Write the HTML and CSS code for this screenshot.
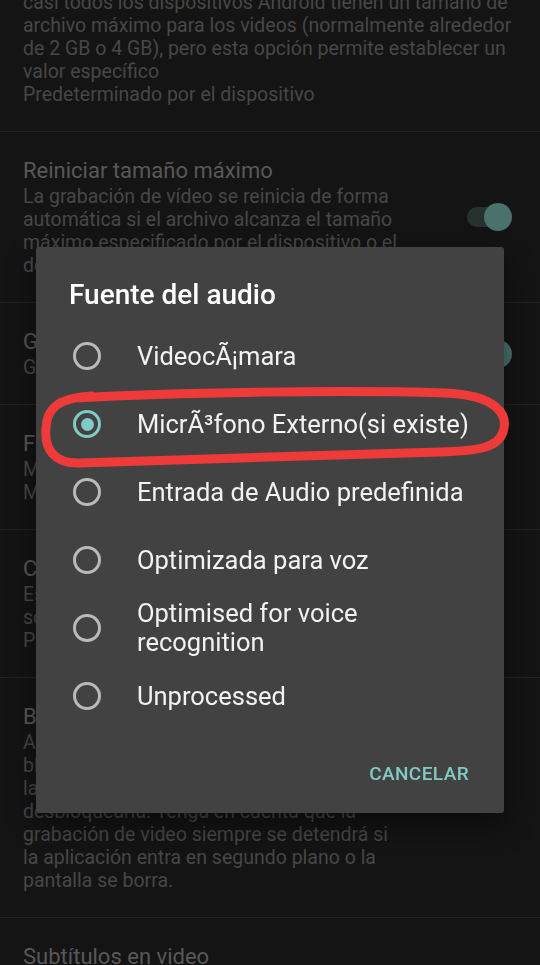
FILE: index.html
```html
<!DOCTYPE html>
<html lang="es">
<head>
    <meta charset="UTF-8">
    <meta name="viewport" content="width=device-width, initial-scale=1.0">
    <title>Ajustes de video</title>
    <link rel="stylesheet" href="styles.css">
</head>
<body>
    <ul class="prefs">
        <li class="pref">
            <div class="pref-text wide">
                <p class="pref-title">Tamaño máximo de archivo de video</p>
                <p class="pref-summary">casi todos los dispositivos Android tienen un tamaño de<br>archivo máximo para los videos (normalmente alrededor<br>de 2 GB o 4 GB), pero esta opción permite establecer un<br>valor específico<br>Predeterminado por el dispositivo</p>
            </div>
        </li>
        <li class="pref">
            <div class="pref-text">
                <p class="pref-title">Reiniciar tamaño máximo</p>
                <p class="pref-summary">La grabación de vídeo se reinicia de forma<br>automática si el archivo alcanza el tamaño<br>máximo especificado por el dispositivo o el<br>definido por el usuario</p>
            </div>
            <span class="switch on"></span>
        </li>
        <li class="pref">
            <div class="pref-text">
                <p class="pref-title">Grabar audio</p>
                <p class="pref-summary">Grabar audio al grabar video</p>
            </div>
            <span class="switch on"></span>
        </li>
        <li class="pref">
            <div class="pref-text">
                <p class="pref-title">Fuente del audio</p>
                <p class="pref-summary">Micrófono usado para grabar el audio<br>MicrÃ³fono Externo(si existe)</p>
            </div>
        </li>
        <li class="pref">
            <div class="pref-text">
                <p class="pref-title">Canales de audio</p>
                <p class="pref-summary">Especifica si se graba en mono o estéreo;<br>solo algunos dispositivos lo soportan<br>Predeterminado (mono)</p>
            </div>
        </li>
        <li class="pref">
            <div class="pref-text">
                <p class="pref-title">Bloquear pantalla al grabar video</p>
                <p class="pref-summary">Al grabar video, la interfaz gráfica se<br>bloqueará para evitar interrupciones y<br>la pantalla se desbloquea deslizando como<br>desbloquearía. Tenga en cuenta que la<br>grabación de video siempre se detendrá si<br>la aplicación entra en segundo plano o la<br>pantalla se borra.</p>
            </div>
        </li>
        <li class="pref">
            <div class="pref-text">
                <p class="pref-title">Subtítulos en video</p>
                <p class="pref-summary">Guardar un archivo de subtítulos con la fecha y hora</p>
            </div>
        </li>
    </ul>

    <div class="scrim">
        <div class="dialog">
            <h2 class="dialog-title">Fuente del audio</h2>
            <ul class="options">
                <li class="option"><span class="radio"></span><span class="option-label">VideocÃ¡mara</span></li>
                <li class="option"><span class="radio checked"></span><span class="option-label">MicrÃ³fono Externo(si existe)</span></li>
                <li class="option"><span class="radio"></span><span class="option-label">Entrada de Audio predefinida</span></li>
                <li class="option"><span class="radio"></span><span class="option-label">Optimizada para voz</span></li>
                <li class="option"><span class="radio"></span><span class="option-label">Optimised for voice<br>recognition</span></li>
                <li class="option"><span class="radio"></span><span class="option-label">Unprocessed</span></li>
            </ul>
            <div class="dialog-actions">
                <button class="text-btn">CANCELAR</button>
            </div>
        </div>
    </div>

    <!-- hand-drawn highlight over the screenshot -->
    <svg class="markup" width="540" height="965" viewBox="0 0 540 965">
        <path d="M75 398 C180 392, 350 390, 445 393 C496 395, 509 414, 503 432 C498 447, 480 451, 440 452 C330 455, 180 460, 80 463 C54 464, 44 449, 46 428 C47 408, 58 398, 92 396"
              fill="none" stroke="#ef3a3a" stroke-width="9" stroke-linecap="round" stroke-linejoin="round"/>
    </svg>
</body>
</html>
```

FILE: styles.css
```css
body {
    margin: 0;
    background-color: #141414;
    font-family: Roboto, "Noto Sans", sans-serif;
    overflow: hidden;
    height: 965px;
}

.prefs {
    list-style: none;
    margin: -62px 0 0;
    padding: 0;
}

.pref {
    display: flex;
    align-items: center;
    padding: 25px 33px 25px 23px;
    border-bottom: 1px solid #222222;
}

.pref-text {
    flex: 1;
    max-width: 400px;
}

.pref-text.wide {
    max-width: none;
}

.pref-title {
    margin: 0;
    font-size: 22px;
    line-height: 28px;
    color: #585858;
}

.pref-summary {
    margin: 0;
    font-size: 19.5px;
    line-height: 23px;
    color: #474747;
    white-space: nowrap;
}

.switch {
    position: relative;
    width: 40px;
    height: 20px;
    margin-left: auto;
    border-radius: 10px;
    background-color: #26322f;
}

.switch::after {
    content: "";
    position: absolute;
    top: -4px;
    right: -5px;
    width: 28px;
    height: 28px;
    border-radius: 50%;
    background-color: #4b716d;
}

.scrim {
    position: fixed;
    top: 0;
    left: 0;
    right: 0;
    bottom: 0;
    display: flex;
    justify-content: center;
    align-items: flex-start;
    padding-top: 247px;
}

.dialog {
    width: 468px;
    background-color: #424242;
    border-radius: 3px;
    padding-top: 32px;
    box-shadow: 0 12px 30px rgba(0, 0, 0, 0.45);
}

.dialog-title {
    margin: 0 0 11px 33px;
    font-size: 28px;
    line-height: 32px;
    font-weight: 500;
    color: #ffffff;
}

.options {
    list-style: none;
    margin: 0;
    padding: 0;
}

.option {
    display: flex;
    align-items: center;
    gap: 36px;
    min-height: 68px;
    padding-left: 37px;
}

.radio {
    flex: none;
    box-sizing: border-box;
    width: 28px;
    height: 28px;
    border: 3px solid #bababa;
    border-radius: 50%;
    display: flex;
    align-items: center;
    justify-content: center;
}

.radio.checked {
    border-color: #80cbc4;
}

.radio.checked::after {
    content: "";
    width: 13px;
    height: 13px;
    border-radius: 50%;
    background-color: #80cbc4;
}

.option-label {
    font-size: 25.5px;
    line-height: 29px;
    color: #f2f2f2;
}

.dialog-actions {
    display: flex;
    justify-content: flex-end;
    padding: 32px 35px 27px 0;
}

.text-btn {
    background: none;
    border: none;
    padding: 0;
    font-family: Roboto, sans-serif;
    font-size: 19px;
    line-height: 24px;
    font-weight: 500;
    letter-spacing: 0.4px;
    color: #80cbc4;
}

.markup {
    position: fixed;
    top: 0;
    left: 0;
    pointer-events: none;
}
```
